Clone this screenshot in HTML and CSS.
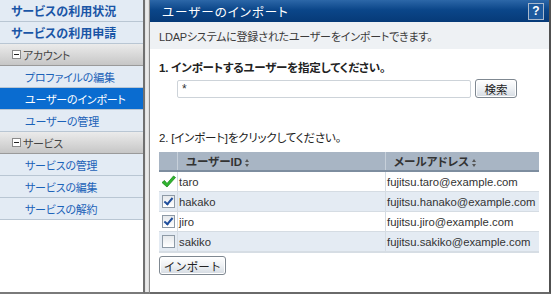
FILE: index.html
```html
<!DOCTYPE html>
<html lang="ja">
<head>
    <meta charset="UTF-8">
    <title>ユーザーのインポート</title>
    <link rel="stylesheet" href="styles.css">
</head>
<body>
    <div class="app">
        <nav class="sidebar">
            <a class="nav-top">サービスの利用状況</a>
            <a class="nav-top">サービスの利用申請</a>
            <div class="nav-group"><span class="collapse-box"></span>アカウント</div>
            <a class="nav-sub">プロファイルの編集</a>
            <a class="nav-sub active">ユーザーのインポート</a>
            <a class="nav-sub">ユーザーの管理</a>
            <div class="nav-group"><span class="collapse-box"></span>サービス</div>
            <a class="nav-sub">サービスの管理</a>
            <a class="nav-sub">サービスの編集</a>
            <a class="nav-sub">サービスの解約</a>
        </nav>

        <div class="splitter"></div>

        <main class="main">
            <div class="panel-header">
                <span class="panel-title">ユーザーのインポート</span>
                <span class="help-btn">?</span>
            </div>
            <div class="panel-desc">LDAPシステムに登録されたユーザーをインポートできます。</div>

            <div class="panel-body">
                <h2 class="step-title bold">1. インポートするユーザーを指定してください。</h2>
                <div class="search-row">
                    <input type="text" class="search-input" value="*">
                    <button class="btn search-btn">検索</button>
                </div>

                <h2 class="step-title step-two">2. [インポート]をクリックしてください。</h2>
                <table class="user-table">
                    <thead>
                        <tr>
                            <th class="col-check"></th>
                            <th class="col-id">ユーザーID <span class="sort-icon"></span></th>
                            <th class="col-mail">メールアドレス <span class="sort-icon"></span></th>
                        </tr>
                    </thead>
                    <tbody>
                        <tr>
                            <td class="col-check">
                                <svg class="done-icon" width="15" height="13" viewBox="0 0 15 13">
                                    <path d="M1 7.5 L3.5 5.5 L6 8.5 L12.5 1 L14.5 2.5 L6 12 Z" fill="#2fb52f" stroke="#1f8a1f" stroke-width="0.8" stroke-linejoin="round"/>
                                </svg>
                            </td>
                            <td>taro</td>
                            <td>fujitsu.taro@example.com</td>
                        </tr>
                        <tr class="alt">
                            <td class="col-check"><span class="checkbox checked"></span></td>
                            <td>hakako</td>
                            <td>fujitsu.hanako@example.com</td>
                        </tr>
                        <tr>
                            <td class="col-check"><span class="checkbox checked"></span></td>
                            <td>jiro</td>
                            <td>fujitsu.jiro@example.com</td>
                        </tr>
                        <tr class="alt">
                            <td class="col-check"><span class="checkbox"></span></td>
                            <td>sakiko</td>
                            <td>fujitsu.sakiko@example.com</td>
                        </tr>
                    </tbody>
                </table>

                <button class="btn import-btn">インポート</button>
            </div>
        </main>
    </div>
</body>
</html>
```

FILE: styles.css
```css
:root {
    --nav-bg: #e3ebf4;
    --nav-line: #b9c6d3;
    --nav-text: #1b62b8;
    --nav-active: #0a6cd0;
    --header-top: #2c67a8;
    --header-bottom: #063a78;
    --desc-bg: #eef1f4;
    --text-color: #333333;
    --table-head: #a8b5c4;
    --row-alt: #e4ebf3;
}

html, body {
    margin: 0;
    padding: 0;
    background: #ffffff;
    font-family: "Liberation Sans", "Noto Sans CJK JP", sans-serif;
    font-size: 12px;
    color: var(--text-color);
    font-feature-settings: "palt";
}

.app {
    display: flex;
    height: 294px;
    width: 551px;
}

/* Sidebar */
.sidebar {
    width: 145px;
    flex: none;
    display: flex;
    flex-direction: column;
    background: #ffffff;
    border-right: 2px solid #707070;
    border-bottom: 2px solid #7a7a7a;
    box-sizing: border-box;
}

.sidebar a,
.nav-group {
    display: flex;
    align-items: center;
    height: 21px;
    border-bottom: 1px solid var(--nav-line);
    background: var(--nav-bg);
    color: var(--nav-text);
    white-space: nowrap;
}

.nav-top {
    padding-left: 11px;
    font-weight: bold;
    color: #1a55a6 !important;
}

.nav-sub {
    padding-left: 25px;
    font-size: 11px;
    letter-spacing: -0.2px;
}

.nav-sub.active {
    background: var(--nav-active) !important;
    color: #ffffff !important;
}

.nav-group {
    padding-left: 12px;
    font-size: 11px;
    letter-spacing: -0.3px;
    color: #444444 !important;
    background: linear-gradient(to bottom, #ebebeb, #d5d5d5 60%, #c6c6c6) !important;
    border-bottom: 1px solid #9a9a9a !important;
}

.collapse-box {
    width: 7px;
    height: 7px;
    border: 1px solid #8a8a8a;
    background: #ffffff;
    margin-right: 2px;
    position: relative;
}

.collapse-box::after {
    content: "";
    position: absolute;
    left: 1px;
    top: 3px;
    width: 5px;
    height: 1px;
    background: #222222;
}

.splitter {
    width: 5px;
    flex: none;
    background: linear-gradient(to right, #dcdcdc, #efefef, #d8d8d8);
    border-right: 1px solid #8c8c8c;
    border-bottom: 2px solid #7a7a7a;
    box-sizing: border-box;
}

/* Main panel */
.main {
    flex: 1;
    display: flex;
    flex-direction: column;
    border-right: 2px solid #505050;
    border-bottom: 2px solid #6a6a6a;
    box-sizing: border-box;
    min-width: 0;
}

.panel-header {
    height: 22px;
    flex: none;
    display: flex;
    align-items: center;
    justify-content: space-between;
    padding: 0 5px 0 12px;
    background: linear-gradient(to bottom, var(--header-top), #0b4689 45%, var(--header-bottom));
}

.panel-title {
    color: #ffffff;
    font-size: 12.5px;
    letter-spacing: 1px;
}

.help-btn {
    width: 14px;
    height: 15px;
    border: 1px solid #a8b8cc;
    color: #ffffff;
    font-size: 12px;
    font-weight: bold;
    display: flex;
    align-items: center;
    justify-content: center;
    background: #1d5a9e;
}

.panel-desc {
    height: 27px;
    flex: none;
    display: flex;
    align-items: center;
    padding-left: 9px;
    background: var(--desc-bg);
    color: #3a3a3a;
    font-size: 11px;
    letter-spacing: -0.2px;
}

.panel-body {
    padding: 11px 0 0 9px;
}

.step-title {
    margin: 0;
    font-size: 11.5px;
    font-weight: normal;
    line-height: 16px;
    color: #222222;
    letter-spacing: -0.2px;
}

.step-title.bold {
    font-weight: bold;
}

.step-two {
    margin-top: 32px;
}

.search-row {
    display: flex;
    align-items: center;
    gap: 4px;
    margin: 3px 0 0 18px;
}

.search-input {
    width: 294px;
    height: 18px;
    box-sizing: border-box;
    border: 1px solid #cdd3d9;
    border-radius: 2px;
    padding: 0 4px;
    font-family: inherit;
    font-size: 12px;
    color: #333333;
}

.btn {
    height: 19px;
    padding: 0;
    border: 1px solid #7f8891;
    border-radius: 3px;
    background: linear-gradient(to bottom, #ffffff, #eef1f4 50%, #d5dbe2);
    font-family: inherit;
    font-size: 11.5px;
    color: #222222;
    box-shadow: inset 0 0 0 1px #ffffff;
}

.search-btn {
    width: 42px;
}

/* Table */
.user-table {
    margin-top: 6px;
    width: 380px;
    table-layout: fixed;
    border-collapse: collapse;
    border-bottom: 2px solid #d6dde4;
    font-size: 11.3px;
}

.user-table th {
    height: 18px;
    background: var(--table-head);
    border-bottom: 2px solid #7d8d9f;
    border-left: 1px solid #c7d0da;
    text-align: left;
    font-weight: bold;
    font-size: 11.5px;
    color: #333333;
    padding: 0 0 0 8px;
    white-space: nowrap;
}

.user-table th:first-child {
    border-left: none;
}

.user-table td {
    height: 19px;
    padding: 0 0 0 1px;
    border-bottom: 1px solid #d5dce3;
    border-left: 1px solid #d5dce3;
    white-space: nowrap;
    color: #333333;
}

.user-table td:first-child {
    border-left: none;
}

.user-table tr.alt td {
    background: var(--row-alt);
}

.col-check {
    width: 18px;
    padding: 0 !important;
    text-align: center;
}

.col-id {
    width: 199px;
}

.done-icon {
    display: block;
    margin: 0 auto;
}

.checkbox {
    display: inline-block;
    width: 11px;
    height: 11px;
    border: 1px solid #8e9aa6;
    background: linear-gradient(to bottom, #e6e9ec, #ffffff);
    vertical-align: middle;
    position: relative;
}

.checkbox.checked::after {
    content: "";
    position: absolute;
    left: 3px;
    top: 0px;
    width: 3px;
    height: 7px;
    border-right: 2px solid #1f4e9c;
    border-bottom: 2px solid #1f4e9c;
    transform: rotate(40deg);
}

.sort-icon {
    display: inline-block;
    width: 5px;
    height: 8px;
    vertical-align: middle;
    position: relative;
}

.sort-icon::before,
.sort-icon::after {
    content: "";
    position: absolute;
    left: 0;
    border-left: 2.5px solid transparent;
    border-right: 2.5px solid transparent;
}

.sort-icon::before {
    top: 0;
    border-bottom: 3px solid #555555;
}

.sort-icon::after {
    bottom: 0;
    border-top: 3px solid #555555;
}

.import-btn {
    display: block;
    margin-top: 3px;
    width: 67px;
}
```
